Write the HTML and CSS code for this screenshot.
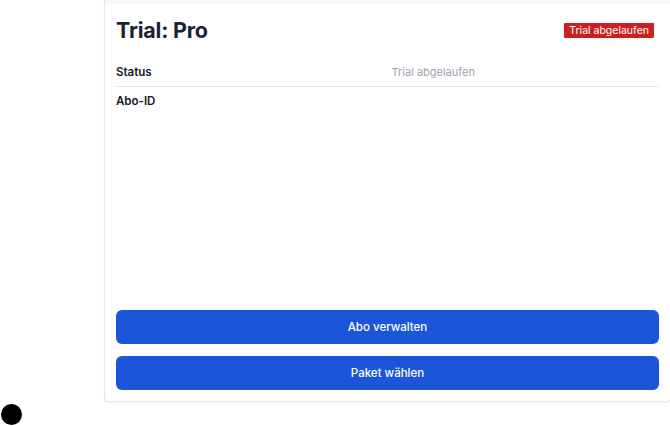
FILE: index.html
```html
<!DOCTYPE html>
<html lang="de">
<head>
<meta charset="utf-8">
<title>Trial: Pro</title>
<link rel="stylesheet" href="styles.css">
</head>
<body>
<div class="page">
  <section class="card">
    <div class="card-top"></div>
    <div class="card-body">
      <header class="card-header">
        <h1 class="title">Trial: Pro</h1>
        <span class="badge">Trial abgelaufen</span>
      </header>
      <dl class="details">
        <div class="row row-divided">
          <dt class="label">Status</dt>
          <dd class="value">Trial abgelaufen</dd>
        </div>
        <div class="row">
          <dt class="label">Abo-ID</dt>
          <dd class="value"></dd>
        </div>
      </dl>
      <div class="actions">
        <button class="btn" type="button">Abo verwalten</button>
        <button class="btn" type="button">Paket wählen</button>
      </div>
    </div>
  </section>
</div>
<div class="dev-dot"></div>
</body>
</html>
```
FILE: styles.css
```css
* { box-sizing: border-box; }
html, body { margin: 0; padding: 0; background: #ffffff; }
body {
  font-family: Inter, "Noto Sans", "Liberation Sans", sans-serif;
  color: #111827;
  width: 670px;
  height: 426px;
  overflow: hidden;
  position: relative;
}
.page {
  padding-left: 104px;
}
.card {
  width: 567px;
  height: 402px;
  background: #ffffff;
  border: 1px solid #e7e8ea;
  border-top: none;
  border-radius: 0 0 4px 4px;
  box-shadow: 0 1px 2px rgba(0, 0, 0, 0.06);
  display: flex;
  flex-direction: column;
}
.card-top {
  height: 4px;
  background: #f7f8fa;
}
.card-body {
  flex: 1;
  display: flex;
  flex-direction: column;
  padding: 12px 11px 11px 11px;
}
.card-header {
  display: flex;
  align-items: center;
  justify-content: space-between;
  height: 28px;
  padding-right: 5px;
}
.title {
  margin: 0;
  font-size: 21.5px;
  line-height: 28px;
  font-weight: 700;
  color: #1b2333;
  letter-spacing: -0.2px;
}
.badge {
  background: #cd1f1f;
  color: #ffffff;
  font-size: 10.5px;
  line-height: 15px;
  height: 15px;
  padding: 0 5px;
  border-radius: 1px;
  font-weight: 400;
}
.details {
  margin: 14px 0 0 0;
}
.row {
  display: grid;
  grid-template-columns: 1fr 1fr;
  column-gap: 8px;
  padding: 4px 0;
}
.row-divided {
  border-bottom: 1px solid #e5e7eb;
}
.label {
  font-size: 11.5px;
  line-height: 20px;
  font-weight: 600;
  color: #111827;
}
.value {
  margin: 0;
  font-size: 11px;
  line-height: 20px;
  color: #9ca3af;
}
.actions {
  margin-top: auto;
  display: flex;
  flex-direction: column;
  gap: 12px;
}
.btn {
  height: 34px;
  border: none;
  border-radius: 6px;
  background: #1b56da;
  color: #ffffff;
  font-family: inherit;
  font-size: 11.5px;
  font-weight: 500;
}
.dev-dot {
  position: absolute;
  left: 1px;
  top: 404px;
  width: 21px;
  height: 21px;
  border-radius: 50%;
  background: #000000;
}
```
